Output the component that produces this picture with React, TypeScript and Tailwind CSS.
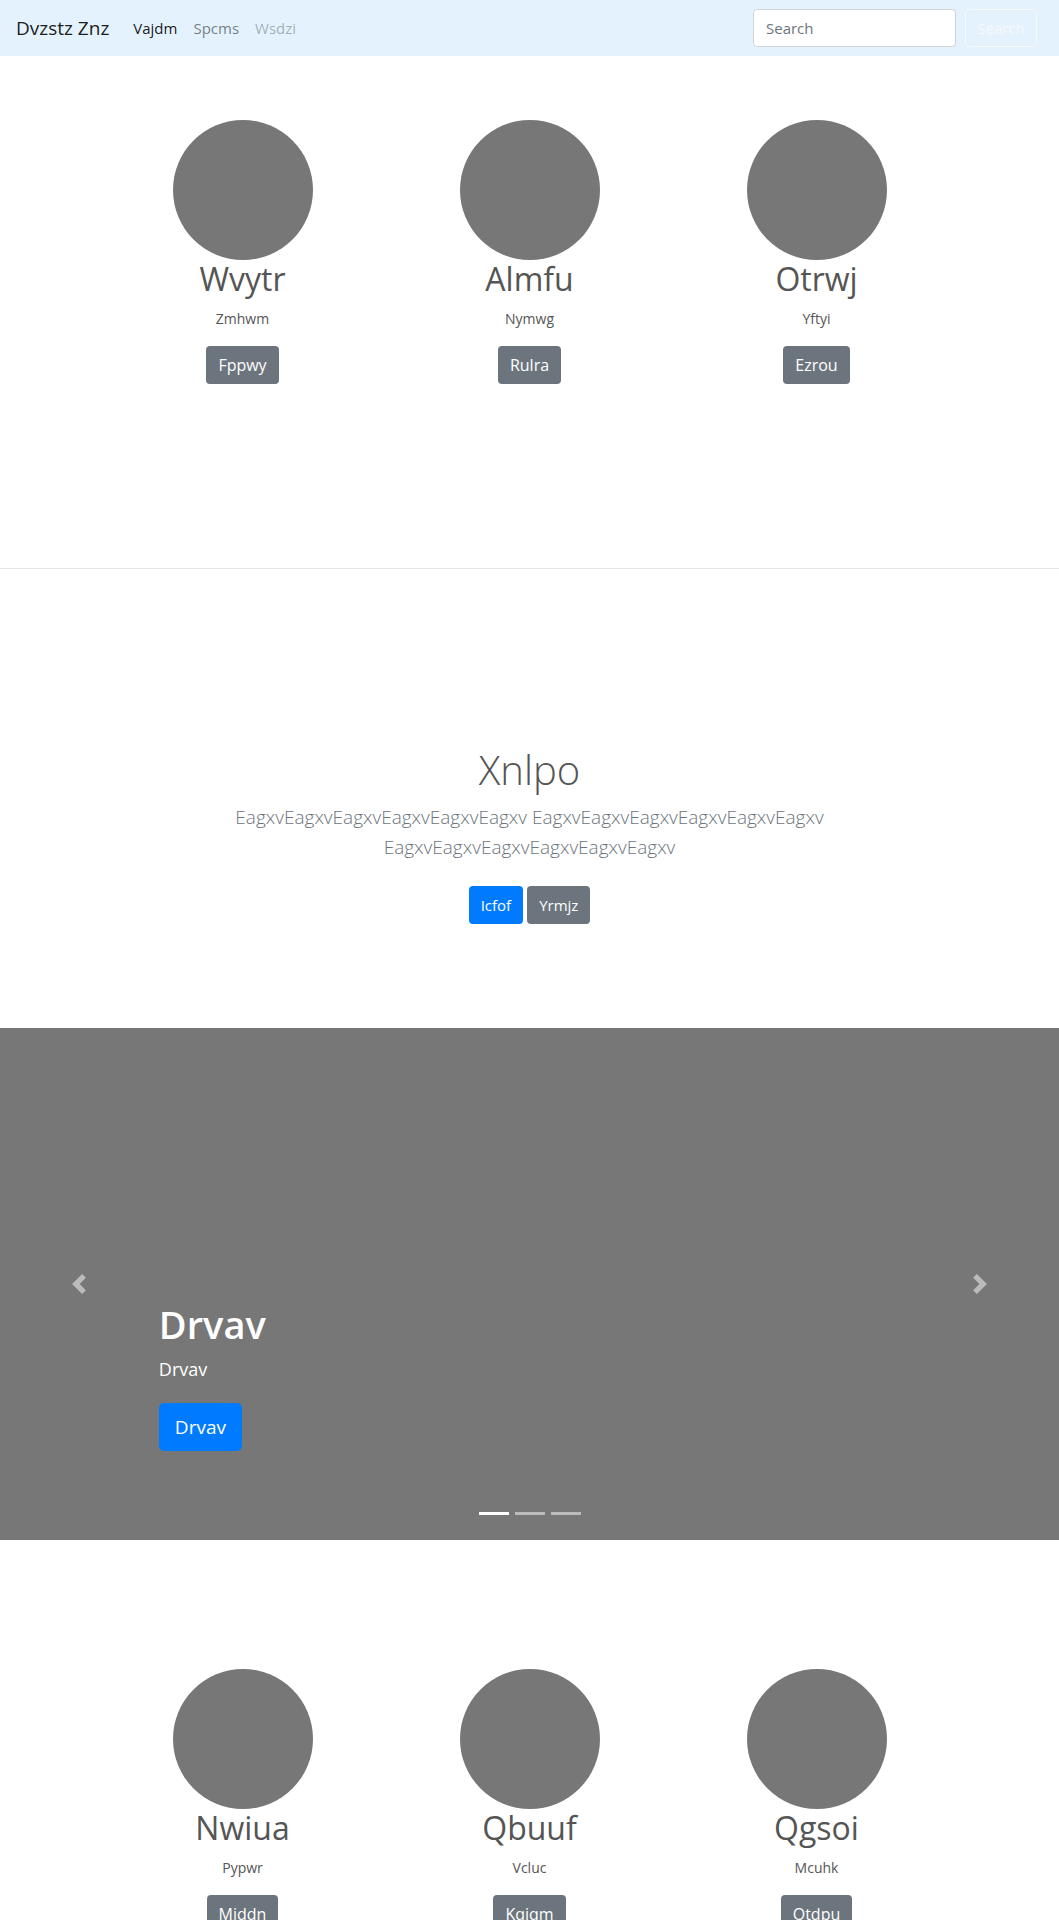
import { useState } from 'react';

type Person = { name: string; role: string; action: string };

const topRow: Person[] = [
  { name: 'Wvytr', role: 'Zmhwm', action: 'Fppwy' },
  { name: 'Almfu', role: 'Nymwg', action: 'Rulra' },
  { name: 'Otrwj', role: 'Yftyi', action: 'Ezrou' },
];

const bottomRow: Person[] = [
  { name: 'Nwiua', role: 'Pypwr', action: 'Middn' },
  { name: 'Qbuuf', role: 'Vcluc', action: 'Kqjqm' },
  { name: 'Qgsoi', role: 'Mcuhk', action: 'Qtdpu' },
];

const word = 'EagxvEagxvEagxvEagxvEagxvEagxv';

function PersonCol({ p }: { p: Person }) {
  return (
    <div className="flex flex-col items-center text-center">
      <div className="w-[140px] h-[140px] rounded-full bg-[#777]" />
      <h2 className="text-[32px] leading-[38px] font-normal text-[#555] mb-[10px]">{p.name}</h2>
      <p className="text-[14px] leading-[21px] text-[#555] mx-3 mb-[17px]">{p.role}</p>
      <button
        type="button"
        className="h-[38px] px-3 rounded bg-[#6c757d] text-white text-[16px] leading-6"
      >
        {p.action}
      </button>
    </div>
  );
}

function Chevron({ dir }: { dir: 'prev' | 'next' }) {
  return (
    <svg width="20" height="20" viewBox="0 0 8 8" fill="#fff" className="opacity-50">
      {dir === 'prev' ? (
        <path d="M5.25 0l-4 4 4 4 1.5-1.5-2.5-2.5 2.5-2.5-1.5-1.5z" />
      ) : (
        <path d="M2.75 0l-1.5 1.5 2.5 2.5-2.5 2.5 1.5 1.5 4-4-4-4z" />
      )}
    </svg>
  );
}

export default function App() {
  const [slide, setSlide] = useState(0);

  return (
    <div
      className="min-h-screen bg-white text-[#212529]"
      style={{ fontFamily: '"Segoe UI", "Open Sans", "Liberation Sans", sans-serif' }}
    >
      {/* navbar */}
      <nav className="h-14 bg-[#e3f2fd] flex items-center pl-4 pr-[22px]">
        <a className="text-[19px] text-black/90 mr-4">Dvzstz Znz</a>
        <ul className="flex items-center text-[15px]">
          <li className="px-2 text-black/90">Vajdm</li>
          <li className="px-2 text-black/50">Spcms</li>
          <li className="px-2 text-black/30">Wsdzi</li>
        </ul>
        <div className="ml-auto flex items-center">
          <input
            placeholder="Search"
            className="w-[203px] h-[38px] px-3 rounded border border-[#ced4da] bg-white text-[15px] placeholder:text-[#6c757d] outline-none mr-[9px]"
          />
          <button
            type="button"
            className="w-[72px] h-[38px] rounded border border-[#f8f9fa] text-[#f8f9fa] text-[15px]"
          >
            Search
          </button>
        </div>
      </nav>

      {/* first team row */}
      <section className="pt-16 pb-[184px]">
        <div className="w-[861px] mx-auto grid grid-cols-3">
          {topRow.map((p) => (
            <PersonCol key={p.name} p={p} />
          ))}
        </div>
      </section>

      <hr className="border-0 border-t border-black/10" />

      {/* hero */}
      <section className="pt-[177px] pb-[96px] text-center">
        <div className="max-w-[640px] mx-auto px-[15px]">
          <h1 className="text-[40px] leading-[48px] font-light text-[#555] mb-2">Xnlpo</h1>
          <p className="text-[19px] leading-[30px] font-light text-[#6c757d] mb-6">
            {word} {word} {word}
          </p>
          <div className="flex justify-center gap-1 mb-2">
            <button type="button" className="h-[38px] px-3 rounded bg-[#007bff] text-white text-[15px]">
              Icfof
            </button>
            <button type="button" className="h-[38px] px-3 rounded bg-[#6c757d] text-white text-[15px]">
              Yrmjz
            </button>
          </div>
        </div>
      </section>

      {/* carousel */}
      <section className="relative h-[512px] bg-[#777] overflow-hidden">
        <button
          type="button"
          onClick={() => setSlide((slide + 2) % 3)}
          className="absolute left-0 top-0 bottom-0 w-[15%] flex items-center justify-center"
        >
          <Chevron dir="prev" />
        </button>
        <button
          type="button"
          onClick={() => setSlide((slide + 1) % 3)}
          className="absolute right-0 top-0 bottom-0 w-[15%] flex items-center justify-center"
        >
          <Chevron dir="next" />
        </button>

        <div className="absolute left-[15%] right-[15%] bottom-[89px] text-white text-left">
          <h1 className="text-[38px] leading-[48px] font-semibold mb-2">Drvav</h1>
          <p className="text-[18px] leading-[27px] mb-5">Drvav</p>
          <button type="button" className="h-12 px-4 rounded-[5px] bg-[#007bff] text-white text-[19px]">
            Drvav
          </button>
        </div>

        <ol className="absolute bottom-[25px] left-0 right-0 flex justify-center gap-[6px]">
          {[0, 1, 2].map((i) => (
            <li
              key={i}
              onClick={() => setSlide(i)}
              className={`w-[30px] h-[3px] bg-white ${i === slide ? 'opacity-100' : 'opacity-50'}`}
            />
          ))}
        </ol>
      </section>

      {/* second team row */}
      <section className="pt-[129px] pb-10">
        <div className="w-[861px] mx-auto grid grid-cols-3">
          {bottomRow.map((p) => (
            <PersonCol key={p.name} p={p} />
          ))}
        </div>
      </section>
    </div>
  );
}
